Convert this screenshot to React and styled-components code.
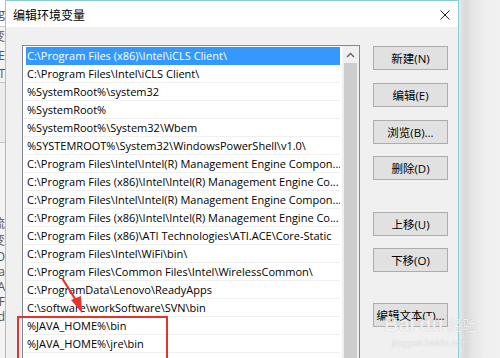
import React from 'react';
import styled, { createGlobalStyle } from 'styled-components';

const GlobalStyle = createGlobalStyle`
  html, body {
    margin: 0;
    padding: 0;
    width: 500px;
    height: 358px;
    overflow: hidden;
    background: #f0f0f0;
  }
  * {
    box-sizing: border-box;
  }
`;

const UI_FONT = `'Open Sans', 'Noto Sans CJK SC', sans-serif`;

const Screen = styled.div`
  position: relative;
  display: flex;
  width: 500px;
  height: 358px;
  overflow: hidden;
  font-family: ${UI_FONT};
  font-size: 11px;
  color: #000;
`;

const BehindWindow = styled.div`
  width: 5px;
  flex-shrink: 0;
  display: flex;
  flex-direction: column;
  align-items: flex-end;
  overflow: hidden;
  background: #f3f3f3;
  color: #555;
  font-size: 12px;
  white-space: nowrap;
`;

const BehindLine = styled.div`
  height: ${({ h }) => h}px;
  flex-shrink: 0;
  line-height: ${({ h }) => h}px;
  background: ${({ bg }) => bg || 'transparent'};
  border-bottom: ${({ line }) => (line ? '1px solid #c8c8c8' : 'none')};
  width: 40px;
  text-align: right;
`;

const Dialog = styled.div`
  width: 454px;
  flex-shrink: 0;
  display: flex;
  flex-direction: column;
  border: 1px solid #86cfd2;
  border-bottom: none;
  background: #f0f0f0;
`;

const TitleBar = styled.div`
  height: 26px;
  flex-shrink: 0;
  display: flex;
  align-items: center;
  justify-content: space-between;
  padding: 0 8px 0 7px;
  background: #fff;
  font-family: 'Noto Sans CJK SC', sans-serif;
  font-size: 12px;
`;

const CloseIcon = styled.svg`
  width: 10px;
  height: 10px;
  margin-top: 1px;
`;

const Body = styled.div`
  flex: 1;
  min-height: 0;
  display: flex;
  padding: 18px 0 0 16px;
`;

const ListBox = styled.div`
  width: 338px;
  display: flex;
  border: 1px solid #828790;
  border-bottom: none;
  background: #fff;
`;

const Rows = styled.div`
  flex: 1;
  padding: 1px 2px 0 1px;
  overflow: hidden;
`;

const Row = styled.div`
  height: 18px;
  line-height: 17px;
  padding-left: ${({ selected }) => (selected ? '1px' : '3px')};
  margin-left: ${({ selected }) => (selected ? '2px' : '0')};
  border-bottom: 1px solid ${({ selected }) => (selected ? '#3399ff' : '#f0f0f0')};
  background: ${({ selected }) => (selected ? '#3399ff' : 'transparent')};
  color: ${({ selected }) => (selected ? '#fff' : '#000')};
  white-space: nowrap;
  overflow: hidden;
`;

const ScrollBar = styled.div`
  width: 17px;
  display: flex;
  flex-direction: column;
  align-items: center;
  background: #f0f0f0;
`;

const ScrollArrow = styled.svg`
  width: 9px;
  height: 6px;
  margin: 6px 0 5px;
`;

const ScrollThumb = styled.div`
  width: 13px;
  flex: 1;
  background: #cdcdcd;
`;

const ButtonColumn = styled.div`
  display: flex;
  flex-direction: column;
  margin-left: 13px;
  padding-top: 1px;
`;

const Button = styled.div`
  width: 75px;
  height: 24px;
  flex-shrink: 0;
  margin-top: ${({ gap }) => gap || 0}px;
  display: flex;
  align-items: center;
  justify-content: center;
  background: #e1e1e1;
  border: 1px solid #adadad;
  font-family: ${UI_FONT};
  font-size: 11.5px;
`;

const Desktop = styled.div`
  flex: 1;
  background: linear-gradient(
    to right,
    #e9e9e9 0px,
    #d8d8d8 6px,
    #e6e6e6 14px,
    #efefef 26px,
    #f1f1f1 100%
  );
`;

const Annotation = styled.div`
  position: absolute;
  left: 17px;
  top: 316px;
  width: 151px;
  height: 44px;
  border: 2px solid #e8322f;
`;

const Arrow = styled.svg`
  position: absolute;
  left: 55px;
  top: 272px;
  width: 40px;
  height: 46px;
`;

const Watermark = styled.div`
  position: absolute;
  left: 384px;
  top: 313px;
  display: flex;
  flex-direction: column;
  align-items: center;
  color: rgba(255, 255, 255, 0.8);
  text-shadow: 0 0 1px rgba(120, 120, 120, 0.45);
  font-family: 'Liberation Sans', 'Noto Sans CJK SC', sans-serif;
  pointer-events: none;
`;

const WatermarkMain = styled.div`
  display: flex;
  align-items: baseline;
  gap: 4px;
  font-size: 20px;
  font-weight: bold;
  line-height: 22px;
`;

const WatermarkCn = styled.span`
  font-size: 15px;
  font-weight: normal;
`;

const WatermarkUrl = styled.div`
  font-size: 9px;
  line-height: 12px;
  letter-spacing: 0.3px;
`;

const paths = [
  'C:\\Program Files (x86)\\Intel\\iCLS Client\\',
  'C:\\Program Files\\Intel\\iCLS Client\\',
  '%SystemRoot%\\system32',
  '%SystemRoot%',
  '%SystemRoot%\\System32\\Wbem',
  '%SYSTEMROOT%\\System32\\WindowsPowerShell\\v1.0\\',
  'C:\\Program Files\\Intel\\Intel(R) Management Engine Compon...',
  'C:\\Program Files (x86)\\Intel\\Intel(R) Management Engine Co...',
  'C:\\Program Files\\Intel\\Intel(R) Management Engine Compon...',
  'C:\\Program Files (x86)\\Intel\\Intel(R) Management Engine Co...',
  'C:\\Program Files (x86)\\ATI Technologies\\ATI.ACE\\Core-Static',
  'C:\\Program Files\\Intel\\WiFi\\bin\\',
  'C:\\Program Files\\Common Files\\Intel\\WirelessCommon\\',
  'C:\\ProgramData\\Lenovo\\ReadyApps',
  'C:\\software\\workSoftware\\SVN\\bin',
  '%JAVA_HOME%\\bin',
  '%JAVA_HOME%\\jre\\bin',
];

const buttons = [
  { label: '新建(N)', gap: 0 },
  { label: '编辑(E)', gap: 13 },
  { label: '浏览(B)...', gap: 13 },
  { label: '删除(D)', gap: 12 },
  { label: '上移(U)', gap: 32 },
  { label: '下移(O)', gap: 12 },
  { label: '编辑文本(T)...', gap: 31 },
];

const behind = [
  { h: 27, text: 'ng', bg: '#fff', line: true },
  { h: 20, text: '变' },
  { h: 18, text: 'TE' },
  { h: 18, text: 'T', line: true },
  { h: 60, text: '', bg: '#ececec', line: true },
  { h: 72, text: '' },
  { h: 18, text: '流' },
  { h: 16, text: '变' },
  { h: 15, text: 'O' },
  { h: 15, text: 'Pa' },
  { h: 15, text: 'PA' },
  { h: 15, text: 'PF' },
  { h: 15, text: 'ad' },
];

const App = () => (
  <>
    <GlobalStyle />
    <Screen>
      <BehindWindow>
        {behind.map((b, i) => (
          <BehindLine key={i} h={b.h} bg={b.bg} line={b.line}>
            {b.text}
          </BehindLine>
        ))}
      </BehindWindow>
      <Dialog>
        <TitleBar>
          <span>编辑环境变量</span>
          <CloseIcon viewBox="0 0 10 10">
            <path d="M0.5 0.5 L9.5 9.5 M9.5 0.5 L0.5 9.5" stroke="#222" strokeWidth="1" fill="none" />
          </CloseIcon>
        </TitleBar>
        <Body>
          <ListBox>
            <Rows>
              {paths.map((p, i) => (
                <Row key={i} selected={i === 0}>
                  {p}
                </Row>
              ))}
            </Rows>
            <ScrollBar>
              <ScrollArrow viewBox="0 0 9 6">
                <path d="M1 5 L4.5 1.5 L8 5" stroke="#606060" strokeWidth="1.4" fill="none" />
              </ScrollArrow>
              <ScrollThumb />
            </ScrollBar>
          </ListBox>
          <ButtonColumn>
            {buttons.map((b) => (
              <Button key={b.label} gap={b.gap}>
                {b.label}
              </Button>
            ))}
          </ButtonColumn>
        </Body>
      </Dialog>
      <Desktop />
      <Annotation />
      <Arrow viewBox="0 0 40 46">
        <path d="M7 6 L22 30" stroke="#e8322f" strokeWidth="2.2" fill="none" />
        <path d="M16 28 L27 41 L26 24 Z" fill="#e8322f" />
      </Arrow>
      <Watermark>
        <WatermarkMain>
          <span>Bai</span>
          <span>du</span>
          <WatermarkCn>经验</WatermarkCn>
        </WatermarkMain>
        <WatermarkUrl>jingyan.baidu.com</WatermarkUrl>
      </Watermark>
    </Screen>
  </>
);

export default App;
